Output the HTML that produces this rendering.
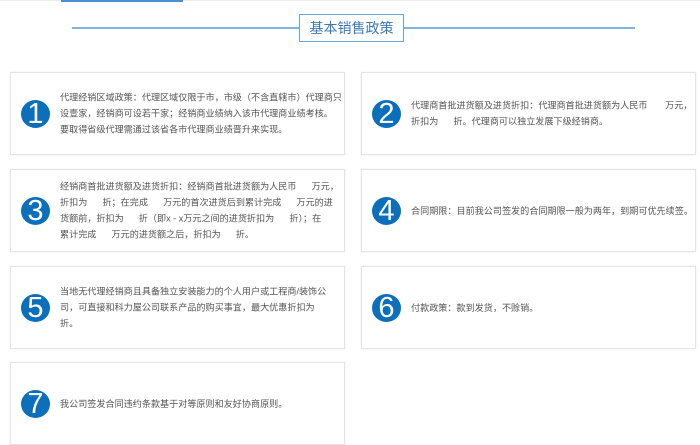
<!DOCTYPE html>
<html><head><meta charset="utf-8"><style>
*{margin:0;padding:0;box-sizing:border-box}
body{width:700px;height:444px;overflow:hidden;background:#fff;font-family:"Liberation Sans","Noto Sans CJK SC",sans-serif;position:relative}
.top{position:absolute;left:0;top:0;width:700px;height:1px;background:#eee}
.topb{position:absolute;left:61px;top:0;width:122px;height:2px;background:#4a8fd4}
.line{position:absolute;left:72px;top:27px;width:563px;height:2px;background:#7fb5e0}
.title{position:absolute;left:299px;top:14px;width:105px;height:28px;border:1px solid #6aa8dc;background:#fff;color:#3a78b8;font-size:14px;line-height:26px;text-align:center}
.card{position:absolute;border:1px solid #e4e4e4;box-shadow:0 0 2px #ececec;background:#fff;overflow:hidden}
.c{position:absolute;left:10px;top:50%;margin-top:-14px;width:29px;height:28px;border-radius:50%;background:#0b6fbc;color:#fff;font-size:29px;line-height:28px;text-align:center;font-family:"Liberation Sans Narrow","Liberation Sans",sans-serif}
.t{position:absolute;left:49px;top:50%;transform:translateY(-50%);font-size:9.1px;line-height:16.3px;color:#555;white-space:nowrap}
</style></head><body>
<div class="top"></div><div class="topb"></div>
<div class="line"></div>
<div class="title">基本销售政策</div>

<div class="card" style="left:10px;top:72px;width:335px;height:83px"><div class="c">1</div><div class="t">代理经销区域政策：代理区域仅限于市，市级（不含直辖市）代理商只<br>设壹家，经销商可设若干家；经销商业绩纳入该市代理商业绩考核。<br>要取得省级代理需通过该省各市代理商业绩晋升来实现。</div></div>
<div class="card" style="left:361px;top:72px;width:335px;height:83px"><div class="c">2</div><div class="t">代理商首批进货额及进货折扣：代理商首批进货额为人民币&nbsp;&nbsp;&nbsp;&nbsp;&nbsp;&nbsp;&nbsp;万元，<br>折扣为&nbsp;&nbsp;&nbsp;&nbsp;&nbsp;&nbsp;折。代理商可以独立发展下级经销商。</div></div>

<div class="card" style="left:10px;top:169px;width:335px;height:83px"><div class="c">3</div><div class="t">经销商首批进货额及进货折扣：经销商首批进货额为人民币&nbsp;&nbsp;&nbsp;&nbsp;&nbsp;&nbsp;万元，<br>折扣为&nbsp;&nbsp;&nbsp;&nbsp;&nbsp;&nbsp;折；在完成&nbsp;&nbsp;&nbsp;&nbsp;&nbsp;&nbsp;万元的首次进货后到累计完成&nbsp;&nbsp;&nbsp;&nbsp;&nbsp;&nbsp;万元的进<br>货额前，折扣为&nbsp;&nbsp;&nbsp;&nbsp;&nbsp;&nbsp;折（即x - x万元之间的进货折扣为&nbsp;&nbsp;&nbsp;&nbsp;&nbsp;&nbsp;折）；在<br>累计完成&nbsp;&nbsp;&nbsp;&nbsp;&nbsp;&nbsp;万元的进货额之后，折扣为&nbsp;&nbsp;&nbsp;&nbsp;&nbsp;&nbsp;折。</div></div>
<div class="card" style="left:361px;top:169px;width:335px;height:83px"><div class="c">4</div><div class="t">合同期限：目前我公司签发的合同期限一般为两年，到期可优先续签。</div></div>

<div class="card" style="left:10px;top:266px;width:335px;height:83px"><div class="c">5</div><div class="t">当地无代理经销商且具备独立安装能力的个人用户或工程商/装饰公<br>司，可直接和科力屋公司联系产品的购买事宜，最大优惠折扣为<br>折。</div></div>
<div class="card" style="left:361px;top:266px;width:335px;height:83px"><div class="c">6</div><div class="t">付款政策：款到发货，不赊销。</div></div>

<div class="card" style="left:10px;top:362px;width:335px;height:83px"><div class="c">7</div><div class="t">我公司签发合同违约条款基于对等原则和友好协商原则。</div></div>
</body></html>
